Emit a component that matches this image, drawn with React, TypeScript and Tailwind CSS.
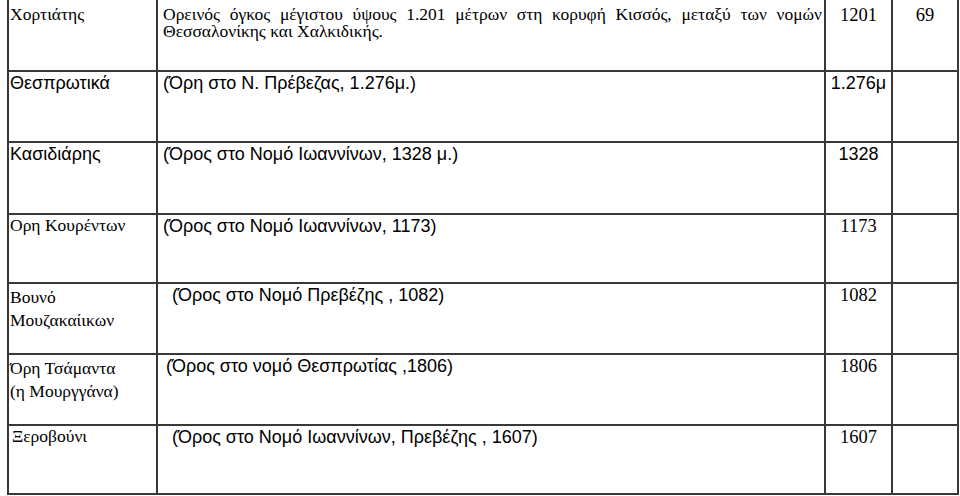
import React from 'react';

type Font = 'serif' | 'sans' | 'serifNum';

interface CellText {
  lines: string[];
  font: Font;
  indent?: string;
  leading?: string;
}

interface Row {
  height: string;
  name: CellText;
  desc: CellText;
  altitude: CellText;
  extra?: string;
}

const fontClass: Record<Font, string> = {
  serif: "font-['Liberation_Serif',serif] text-[17.5px]",
  serifNum: "font-['Liberation_Serif',serif] text-[18.5px]",
  sans: "font-['Liberation_Sans',Arial,sans-serif] text-[18px]",
};

const rows: Row[] = [
  {
    height: 'h-[71px]',
    name: { lines: ['Χορτιάτης'], font: 'serif' },
    desc: {
      lines: [
        'Ορεινός όγκος μέγιστου ύψους 1.201 μέτρων στη κορυφή Κισσός, μεταξύ των νομών Θεσσαλονίκης και Χαλκιδικής.',
      ],
      font: 'serif',
      leading: 'leading-[17px]',
    },
    altitude: { lines: ['1201'], font: 'serifNum' },
    extra: '69',
  },
  {
    height: 'h-[71px]',
    name: { lines: ['Θεσπρωτικά'], font: 'sans' },
    desc: { lines: ['(Όρη στο Ν. Πρέβεζας, 1.276μ.)'], font: 'sans' },
    altitude: { lines: ['1.276μ'], font: 'sans' },
  },
  {
    height: 'h-[72px]',
    name: { lines: ['Κασιδιάρης'], font: 'sans' },
    desc: { lines: ['(Όρος στο Νομό Ιωαννίνων, 1328 μ.)'], font: 'sans' },
    altitude: { lines: ['1328'], font: 'sans' },
  },
  {
    height: 'h-[69px]',
    name: { lines: ['Ορη Κουρέντων'], font: 'serif' },
    desc: { lines: ['(Όρος στο Νομό Ιωαννίνων, 1173)'], font: 'sans' },
    altitude: { lines: ['1173'], font: 'serifNum' },
  },
  {
    height: 'h-[71px]',
    name: { lines: ['Βουνό', 'Μουζακαίικων'], font: 'serif', leading: 'leading-[23px]' },
    desc: { lines: ['(Όρος στο Νομό Πρεβέζης , 1082)'], font: 'sans', indent: 'pl-[14px]' },
    altitude: { lines: ['1082'], font: 'serifNum' },
  },
  {
    height: 'h-[71px]',
    name: { lines: ['Όρη Τσάμαντα', '(η Μουργγάνα)'], font: 'serif', leading: 'leading-[23px]' },
    desc: { lines: ['(Όρος στο νομό Θεσπρωτίας ,1806)'], font: 'sans', indent: 'pl-[8px]' },
    altitude: { lines: ['1806'], font: 'serifNum' },
  },
  {
    height: 'h-[69px]',
    name: { lines: ['Ξεροβούνι'], font: 'serif', indent: 'pl-[3px]' },
    desc: { lines: ['(Όρος στο Νομό Ιωαννίνων, Πρεβέζης , 1607)'], font: 'sans', indent: 'pl-[14px]' },
    altitude: { lines: ['1607'], font: 'serifNum' },
  },
];

function Lines({ cell }: { cell: CellText }) {
  return (
    <>
      {cell.lines.map((line, i) => (
        <div key={i}>{line}</div>
      ))}
    </>
  );
}

export default function App() {
  const border = 'border-2 border-[#383838] align-top p-0';

  return (
    <div className="w-[960px] h-[496px] overflow-hidden bg-white text-black">
      <table className="ml-[7px] w-[952px] table-fixed border-collapse">
        <colgroup>
          <col className="w-[149px]" />
          <col className="w-[668px]" />
          <col className="w-[67px]" />
          <col className="w-[66px]" />
        </colgroup>
        <tbody>
          {rows.map((row, i) => {
            const top = i === 0 ? 'border-t-0 pt-[6px]' : 'pt-[2px]';
            return (
              <tr key={i} className={row.height}>
                <td
                  className={`${border} ${top} ${fontClass[row.name.font]} ${row.name.leading ?? 'leading-none'} ${row.name.indent ?? 'pl-[1px]'}`}
                >
                  <Lines cell={row.name} />
                </td>
                <td
                  className={`${border} ${top} ${fontClass[row.desc.font]} ${row.desc.leading ?? 'leading-none'} ${row.desc.indent ?? 'pl-[5px]'} pr-[2px] text-justify`}
                >
                  <Lines cell={row.desc} />
                </td>
                <td
                  className={`${border} ${top} ${fontClass[row.altitude.font]} leading-none text-center`}
                >
                  <Lines cell={row.altitude} />
                </td>
                <td className={`${border} ${top} ${fontClass.serifNum} leading-none text-center`}>
                  {row.extra ?? ''}
                </td>
              </tr>
            );
          })}
        </tbody>
      </table>
    </div>
  );
}
